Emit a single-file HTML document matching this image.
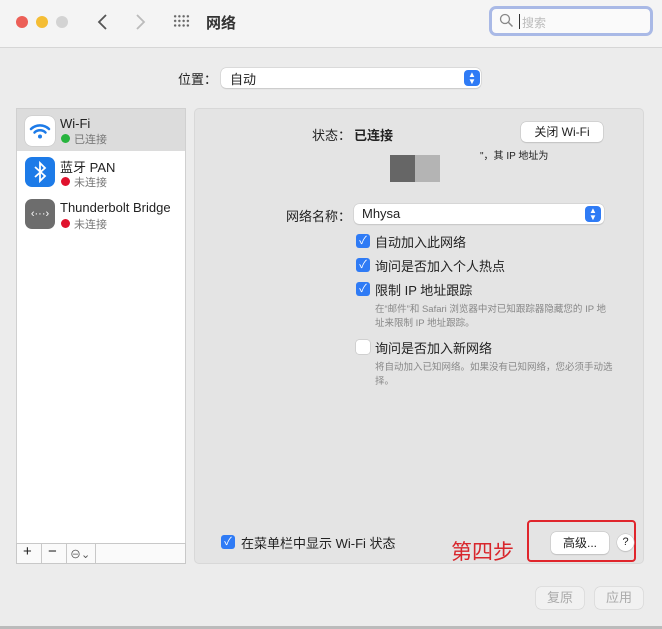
<!DOCTYPE html>
<html><head><meta charset="utf-8"><style>
*{box-sizing:border-box;margin:0;padding:0}
body{width:662px;height:629px;background:#ececec;font-family:"Liberation Sans","Noto Sans CJK SC",sans-serif;color:#222;position:relative;overflow:hidden;font-size:13px}
.abs{position:absolute}
.tb{left:0;top:0;width:662px;height:48px;background:#f4f4f4;border-bottom:1px solid #d6d6d6}
.dot{width:12px;height:12px;border-radius:50%;top:16px}
.sel{background:#fff;border-radius:5px;box-shadow:0 0 0 .5px #c8c8c8,0 1px 1px rgba(0,0,0,.15)}
.arr{width:16px;height:16px;border-radius:4px;background:#2f7bf5;color:#fff;font-size:8px;line-height:7px;text-align:center;padding-top:1px}
.cb{width:14px;height:14px;border-radius:3px;background:#2f7bf5;color:#fff;font-size:11px;line-height:14px;text-align:center}
.btn{background:#fff;border-radius:5px;box-shadow:0 0 0 .5px #c0c0c0,0 1px 1px rgba(0,0,0,.15);text-align:center;font-size:12px}
.small{font-size:9.5px;color:#888;line-height:14px}
</style></head><body>
<div class="abs tb"></div>
<div class="abs dot" style="left:16px;background:#ec5f57"></div>
<div class="abs dot" style="left:36px;background:#f4bd34"></div>
<div class="abs dot" style="left:56px;background:#d3d3d3"></div>
<svg class="abs" style="left:96px;top:13px" width="14" height="18"><path d="M10 2L3 9l7 7" fill="none" stroke="#555" stroke-width="1.8"/></svg>
<svg class="abs" style="left:133px;top:13px" width="14" height="18"><path d="M4 2l7 7-7 7" fill="none" stroke="#bbb" stroke-width="1.8"/></svg>
<div class="abs" style="left:173px;top:14px;width:17px;height:14px;background:radial-gradient(circle,#666 1.1px,transparent 1.3px) 0 0/4.25px 4.6px"></div>
<div class="abs" style="left:206px;top:12px;font-size:15px;font-weight:bold;color:#333">网络</div>
<div class="abs" style="left:489px;top:6px;width:164px;height:30px;border:3px solid #a9b9e6;border-radius:7px;background:#fafafa"></div>
<svg class="abs" style="left:499px;top:13px" width="16" height="16"><circle cx="6" cy="6" r="4.5" fill="none" stroke="#888" stroke-width="1.3"/><path d="M9.5 9.5l4 4" stroke="#888" stroke-width="1.5"/></svg>
<div class="abs" style="left:519px;top:14px;width:1px;height:15px;background:#333"></div>
<div class="abs" style="left:522px;top:14px;font-size:12px;color:#bbb">搜索</div>

<div class="abs" style="left:178px;top:69px;font-size:13px">位置：</div>
<div class="abs sel" style="left:221px;top:68px;width:260px;height:20px"></div>
<div class="abs" style="left:230px;top:69px">自动</div>
<div class="abs arr" style="left:464px;top:70px">▲<br>▼</div>

<div class="abs" style="left:16px;top:108px;width:170px;height:456px;background:#fff;border:1px solid #d0d0d0"></div>
<div class="abs" style="left:17px;top:109px;width:168px;height:42px;background:#dcdcdc"></div>
<div class="abs" style="left:25px;top:116px;width:30px;height:30px;border-radius:7px;background:#fff;box-shadow:0 0 1px #999"><svg width="30" height="30"><g fill="none" stroke="#1d7be8" stroke-width="2.5" stroke-linecap="round"><path d="M6 13a13 13 0 0 1 18 0"/><path d="M9.5 16.5a8 8 0 0 1 11 0"/></g><circle cx="15" cy="20.5" r="2" fill="#1d7be8"/></svg></div>
<div class="abs" style="left:60px;top:116px">Wi-Fi</div>
<div class="abs" style="left:61px;top:134px;width:9px;height:9px;border-radius:50%;background:#27b43e"></div>
<div class="abs" style="left:74px;top:131px;font-size:11px;color:#777">已连接</div>
<div class="abs" style="left:25px;top:157px;width:30px;height:30px;border-radius:7px;background:#1d7be8"><svg width="30" height="30"><path d="M10 10l10 9-5 5V6l5 5-10 9" fill="none" stroke="#fff" stroke-width="1.8"/></svg></div>
<div class="abs" style="left:60px;top:157px">蓝牙 PAN</div>
<div class="abs" style="left:61px;top:177px;width:9px;height:9px;border-radius:50%;background:#e0122d"></div>
<div class="abs" style="left:74px;top:174px;font-size:11px;color:#777">未连接</div>
<div class="abs" style="left:25px;top:199px;width:30px;height:30px;border-radius:7px;background:#6d6d6d;color:#fff;text-align:center;font-size:11px;line-height:30px">‹···›</div>
<div class="abs" style="left:60px;top:200px">Thunderbolt Bridge</div>
<div class="abs" style="left:61px;top:219px;width:9px;height:9px;border-radius:50%;background:#e0122d"></div>
<div class="abs" style="left:74px;top:216px;font-size:11px;color:#777">未连接</div>
<div class="abs" style="left:16px;top:543px;width:170px;height:21px;border:1px solid #c8c8c8;background:#fafafa"></div>
<div class="abs" style="left:41px;top:544px;width:1px;height:19px;background:#c8c8c8"></div>
<div class="abs" style="left:66px;top:544px;width:1px;height:19px;background:#c8c8c8"></div>
<div class="abs" style="left:95px;top:544px;width:1px;height:19px;background:#c8c8c8"></div>
<div class="abs" style="left:23px;top:543px;font-size:15px">+</div>
<div class="abs" style="left:48px;top:543px;font-size:15px">−</div>
<div class="abs" style="left:70px;top:546px;font-size:11px;color:#555">⊖⌄</div>

<div class="abs" style="left:194px;top:108px;width:450px;height:456px;background:#e4e4e4;border:1px solid #d8d8d8;border-radius:5px"></div>
<div class="abs" style="left:312px;top:125px">状态：</div>
<div class="abs" style="left:354px;top:125px;font-weight:bold">已连接</div>
<div class="abs btn" style="left:521px;top:122px;width:82px;height:20px;line-height:20px">关闭 Wi-Fi</div>
<div class="abs" style="left:480px;top:147px;font-size:10px">"，其 IP 地址为</div>
<div class="abs" style="left:390px;top:155px;width:25px;height:27px;background:#666"></div>
<div class="abs" style="left:415px;top:155px;width:25px;height:27px;background:#b4b4b4"></div>
<div class="abs" style="left:286px;top:206px">网络名称：</div>
<div class="abs sel" style="left:354px;top:204px;width:250px;height:20px"></div>
<div class="abs" style="left:362px;top:206px">Mhysa</div>
<div class="abs arr" style="left:585px;top:206px">▲<br>▼</div>
<div class="abs cb" style="left:356px;top:234px">✓</div><div class="abs" style="left:375px;top:232px">自动加入此网络</div>
<div class="abs cb" style="left:356px;top:258px">✓</div><div class="abs" style="left:375px;top:256px">询问是否加入个人热点</div>
<div class="abs cb" style="left:356px;top:282px">✓</div><div class="abs" style="left:375px;top:280px">限制 IP 地址跟踪</div>
<div class="abs small" style="left:375px;top:303px;width:240px">在“邮件”和 Safari 浏览器中对已知跟踪器隐藏您的 IP 地址来限制 IP 地址跟踪。</div>
<div class="abs" style="left:356px;top:340px;width:14px;height:14px;border-radius:3px;background:#fff;box-shadow:0 0 0 .5px #bbb"></div><div class="abs" style="left:375px;top:338px">询问是否加入新网络</div>
<div class="abs small" style="left:375px;top:361px;width:240px">将自动加入已知网络。如果没有已知网络，您必须手动选择。</div>
<div class="abs cb" style="left:221px;top:535px">✓</div><div class="abs" style="left:241px;top:533px">在菜单栏中显示 Wi-Fi 状态</div>
<div class="abs" style="left:451px;top:536px;font-size:21px;color:#d8262c">第四步</div>
<div class="abs" style="left:527px;top:520px;width:109px;height:42px;border:2px solid #e0252c;border-radius:4px"></div>
<div class="abs btn" style="left:551px;top:532px;width:58px;height:22px;line-height:22px">高级...</div>
<div class="abs btn" style="left:617px;top:534px;width:17px;height:17px;border-radius:50%;line-height:17px;font-size:11px">?</div>
<div class="abs" style="left:536px;top:587px;width:48px;height:22px;border-radius:5px;background:#f1f1f1;box-shadow:0 0 0 .5px #d0d0d0;color:#aaa;text-align:center;line-height:22px">复原</div>
<div class="abs" style="left:595px;top:587px;width:48px;height:22px;border-radius:5px;background:#f1f1f1;box-shadow:0 0 0 .5px #d0d0d0;color:#aaa;text-align:center;line-height:22px">应用</div>
<div class="abs" style="left:0;top:626px;width:662px;height:3px;background:#bbb"></div>
</body></html>
